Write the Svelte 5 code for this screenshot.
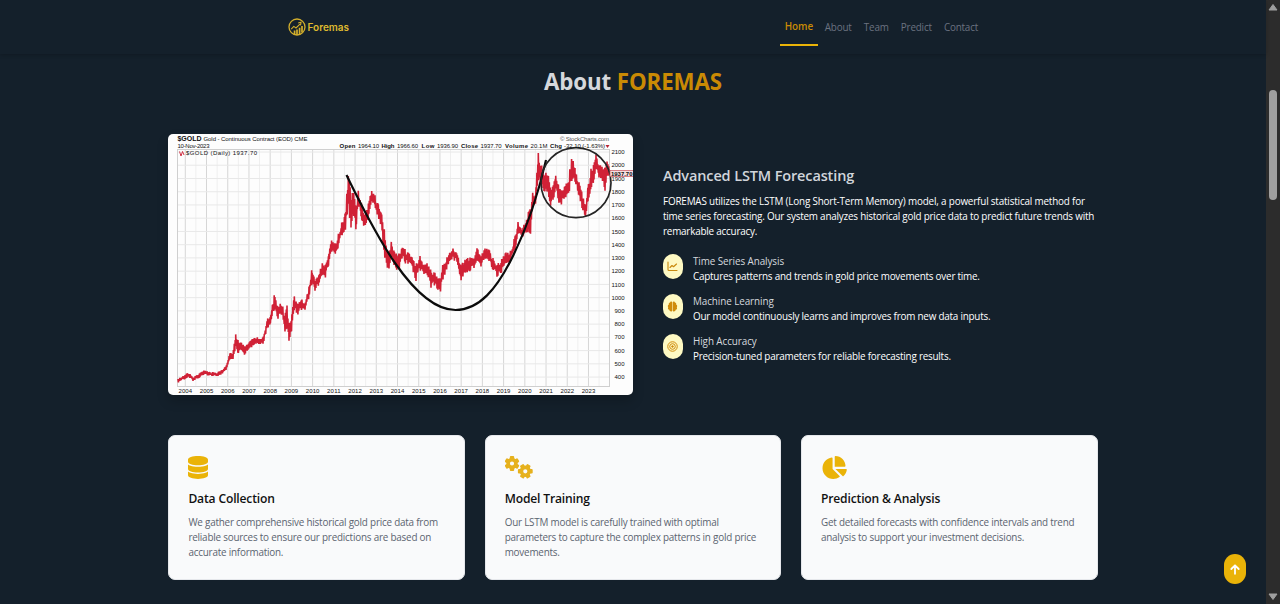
<script>
  const links = ['Home', 'About', 'Team', 'Predict', 'Contact'];
  const features = [
    { icon: 'line', title: 'Time Series Analysis', text: 'Captures patterns and trends in gold price movements over time.' },
    { icon: 'brain', title: 'Machine Learning', text: 'Our model continuously learns and improves from new data inputs.' },
    { icon: 'target', title: 'High Accuracy', text: 'Precision-tuned parameters for reliable forecasting results.' }
  ];
  const cards = [
    { icon: 'db', title: 'Data Collection', lines: ['We gather comprehensive historical gold price data from', 'reliable sources to ensure our predictions are based on', 'accurate information.'] },
    { icon: 'cogs', title: 'Model Training', lines: ['Our LSTM model is carefully trained with optimal', 'parameters to capture the complex patterns in gold price', 'movements.'] },
    { icon: 'pie', title: 'Prediction & Analysis', lines: ['Get detailed forecasts with confidence intervals and trend', 'analysis to support your investment decisions.'] }
  ];

  // Price band: x, high, low
  const band = [
    [178, 379, 383], [183, 376, 380], [187, 373, 378], [190, 374, 378], [193, 377, 381], [199, 374, 378], [205, 369, 374], [208, 372, 376],
    [218, 372, 376], [222, 370, 374], [226, 366, 370], [230, 353, 359], [233, 353, 359], [235.7, 334, 348], [238, 340, 355], [241, 341, 350],
    [244.5, 346, 355], [248, 343, 350], [252, 339, 347], [256, 336, 344], [260, 339, 346], [263, 337, 344], [267.7, 318, 328], [270, 317, 326],
    [272, 307, 316], [274.5, 293, 310], [278, 306, 319], [281.5, 299, 315], [285, 315, 332], [287, 305, 326], [289, 325, 341], [291.5, 312, 332],
    [294.3, 296, 310], [297.5, 304, 316], [301.5, 299, 310], [305, 301, 310], [309, 286, 299], [311.7, 267, 286], [315, 279, 291], [318.3, 275, 286],
    [322.3, 263, 276], [325.7, 264, 278], [328.5, 251, 266], [331.7, 240, 252], [335.7, 243, 256], [341.7, 222, 236], [345, 213, 234], [348.3, 175, 210],
    [351, 190, 228], [353.7, 192, 218], [356, 205, 230], [358.3, 190, 206], [361, 199, 217], [364, 214, 229], [368, 203, 219], [371.7, 191, 201],
    [375, 195, 208], [378.3, 204, 220], [381.7, 214, 228], [384.3, 229, 256], [387.7, 252, 275], [391.7, 240, 258], [394, 250, 265], [398, 255, 275],
    [402, 244, 259], [405, 249, 264], [408, 251, 264], [412, 257, 269], [416, 264, 281], [420, 256, 271], [424, 264, 274], [427, 263, 274],
    [431, 270, 288], [434, 272, 285], [437, 274, 289], [440.5, 280, 292], [443, 258, 280], [447, 257, 269], [451.7, 247, 260], [457, 249, 262],
    [460.7, 264, 283], [465, 259, 276], [470, 257, 272], [474, 255, 268], [477, 248, 262], [481, 255, 267], [485, 248, 259], [489, 249, 261],
    [493, 258, 270], [497, 264, 277], [501.7, 259, 273], [506, 252, 267], [510, 251, 263], [515, 236, 250], [518, 222, 234], [523, 227, 241],
    [527, 214, 232], [530, 208, 240], [532.7, 192, 208], [535.5, 190, 204], [538.3, 153, 180], [541.7, 165, 186], [545, 175, 196], [547, 168, 192],
    [550.7, 189, 209], [555.7, 175, 193], [560, 188, 208], [564, 184, 199], [568, 182, 198], [571.8, 153, 182], [575, 168, 182], [579, 182, 198],
    [582, 192, 208], [585.5, 205, 217], [588, 184, 202], [591, 168, 191], [593.5, 165, 184], [596, 154, 168], [599, 164, 178], [602, 166, 180],
    [605, 168, 191], [607, 161, 176], [609, 165, 181]
  ];
  let seed = 17;
  const rand = () => (seed = (seed * 16807) % 2147483647) / 2147483647;
  let pts = [];
  for (let i = 0; i < band.length - 1; i++) {
    const [x0, h0, l0] = band[i];
    const [x1, h1, l1] = band[i + 1];
    for (let x = x0; x < x1; x += 0.45) {
      const t = (x - x0) / (x1 - x0);
      const h = h0 + (h1 - h0) * t;
      const l = l0 + (l1 - l0) * t;
      const m = (h + l) / 2;
      const up = pts.length % 2 === 0;
      const k = x === x0 ? 0.1 : 0.8;
      const y = up ? h + (m - h) * rand() * k : l + (m - l) * rand() * k;
      pts.push(`${x.toFixed(1)},${y.toFixed(1)}`);
    }
  }
  const series = pts.join(' ');
  const years = Array.from({ length: 20 }, (_, i) => 2004 + i);
  const prices = Array.from({ length: 18 }, (_, i) => 2100 - i * 100);
  const yx = (i) => 185.3 + i * 21.22;
  const py = (i) => 152 + i * 13.24;
  const gear = (cx, cy, rot) =>
    Array.from({ length: 6 }, (_, i) => ({ t: `translate(${cx} ${cy}) rotate(${rot + i * 60})` }));
</script>

<div class="window">
  <div class="page">
    <header>
      <div class="brand">
        <svg width="18" height="18" viewBox="0 0 18 18" fill="none" stroke="#d3af2c">
          <circle cx="9" cy="9" r="8" stroke-width="1.3" />
          <path d="M3.2 11.2 5.8 8.4 8 10 12 6.2" stroke-width="1.1" />
          <path d="M10.2 5 13 4.3 12.5 7.3" stroke-width="1.1" />
          <path d="M6.6 16.5V12.5M9 17V11.5M11.6 16.5V9.8M14 14.5V8" stroke-width="1.7" />
        </svg>
        <span>Foremas</span>
      </div>
      <nav>
        {#each links as link, i}<a class:active={i === 0} href="#{link}">{link}</a>{/each}
      </nav>
    </header>

    <h1><span>About</span> <em>FOREMAS</em></h1>

    <section class="intro">
      <svg class="chart" viewBox="168 134 465 261" width="465" height="261">
        <rect x="168" y="134" width="466" height="261" fill="#fdfdfd" />
        <g stroke="#efefef" stroke-width="1">
          {#each years as _, i}<path d="M{yx(i) + 10.6} 149.5V386.5" />{/each}
        </g>
        <g stroke="#d6d6d6" stroke-width="1">
          {#each years as _, i}<path d="M{yx(i)} 149.5V386.5" />{/each}
        </g>
        <g stroke="#e8e8e8" stroke-width="1">
          {#each prices as _, i}<path d="M177.5 {py(i)}H609.5" />{/each}
        </g>
        <rect x="177.5" y="149.5" width="432" height="237" fill="none" stroke="#cfcfcf" />
        <polyline points={series} fill="none" stroke="#d02136" stroke-width="1.6" stroke-linejoin="bevel" />
        <path d="M346.5 175C355 193 362 206 368.3 218C378 236 386 250 395 263C413 289 434 310 455.5 310C480 310 497 287 510 262C528 227 538 195 546 160" fill="none" stroke="#0c0c0c" stroke-width="2.2" />
        <circle cx="576" cy="182.7" r="35" fill="none" stroke="#252525" stroke-width="1.7" />
        <g class="ct">
          <text x="177.5" y="141" font-weight="700" font-size="7" textLength="24">$GOLD</text>
          <text x="203.5" y="141" textLength="104">Gold - Continuous Contract (EOD) CME</text>
          <text x="177.5" y="148.3" textLength="32">10-Nov-2023</text>
          <text x="560" y="141" textLength="49" class="soft">© StockCharts.com</text>
          <text x="339.5" y="148.3" textLength="16" font-weight="700">Open</text>
          <text x="358" y="148.3" textLength="21">1964.10</text>
          <text x="381.5" y="148.3" textLength="13" font-weight="700">High</text>
          <text x="397" y="148.3" textLength="21">1966.60</text>
          <text x="421.5" y="148.3" textLength="13" font-weight="700">Low</text>
          <text x="437" y="148.3" textLength="21">1936.90</text>
          <text x="461" y="148.3" textLength="17" font-weight="700">Close</text>
          <text x="480.5" y="148.3" textLength="21">1937.70</text>
          <text x="505" y="148.3" textLength="23" font-weight="700">Volume</text>
          <text x="530.5" y="148.3" textLength="17">20.1M</text>
          <text x="550" y="148.3" textLength="12" font-weight="700">Chg</text>
          <text x="564" y="148.3" textLength="41">-32.10 (-1.63%)</text>
          <path d="M605.5 145h4l-2 3z" fill="#b52333" />
          <path d="M179.5 151.5 181 156 182.5 151.5 184 155" fill="none" stroke="#cd2035" stroke-width=".9" />
          <text x="186" y="155.4" textLength="71">$GOLD (Daily) 1937.70</text>
          {#each years as y, i}<text x={yx(i) - 6.8} y="392.6" textLength="13.6">{y}</text>{/each}
          {#each prices as p, i}<text x={p > 999 ? 611.5 : 614.5} y={py(i) + 2.1} textLength={p > 999 ? 13 : 10}>{p}</text>{/each}
        </g>
        <rect x="610" y="170.5" width="23.5" height="6" fill="#f7dfe0" stroke="#c9515b" stroke-width=".7" />
        <text class="now" x="611" y="175.8" textLength="21.5">1937.70</text>
      </svg>

      <div class="copy">
        <h2>Advanced LSTM Forecasting</h2>
        <p class="lead">
          <span>FOREMAS utilizes the LSTM (Long Short-Term Memory) model, a powerful statistical method for</span>
          <span>time series forecasting. Our system analyzes historical gold price data to predict future trends with</span>
          <span>remarkable accuracy.</span>
        </p>
        {#each features as f, i}
          <div class="feature f{i}">
            <div class="pill">
              {#if f.icon === 'line'}
                <svg width="11" height="11" viewBox="0 0 22 22" fill="none" stroke="#c98a10" stroke-width="2.3" stroke-linecap="round" stroke-linejoin="round"><path d="M2 2V17Q2 19 4 19H20" /><path d="M6 13 10 9 13 11.5 19 6" /></svg>
              {:else if f.icon === 'brain'}
                <svg width="11" height="11" viewBox="0 0 22 22" fill="#cf8b0b"><path d="M10.4 2.5C10.4.2 6.5.2 6.2 3 3.8 3 3 5.2 3.8 7 1.4 8 1 11 2.4 12.5 1 15 2.4 17.4 4.6 17.7 4.9 21.5 10.4 22 10.4 19ZM11.6 2.5C11.6.2 15.5.2 15.8 3 18.2 3 19 5.2 18.2 7 20.6 8 21 11 19.6 12.5 21 15 19.6 17.4 17.4 17.7 17.1 21.5 11.6 22 11.6 19Z" /></svg>
              {:else}
                <svg width="11" height="11" viewBox="0 0 22 22" fill="none" stroke="#cf8b0b" stroke-width="2"><circle cx="11" cy="11" r="9.5" /><circle cx="11" cy="11" r="5.6" /><circle cx="11" cy="11" r="1.6" fill="#cf8b0b" /></svg>
              {/if}
            </div>
            <div><h3>{f.title}</h3><p>{f.text}</p></div>
          </div>
        {/each}
      </div>
    </section>

    <section class="cards">
      {#each cards as c}
        <article>
          {#if c.icon === 'db'}
            <svg width="20" height="23" viewBox="0 0 448 512" fill="#eab308"><path d="M448 80v48c0 44.200-100.300 80-224 80S0 172.200 0 128V80C0 35.800 100.300 0 224 0S448 35.800 448 80zM393.200 214.700c20.800-7.400 39.900-16.900 54.800-28.600V288c0 44.200-100.300 80-224 80S0 332.200 0 288V186.100c14.900 11.800 34 21.200 54.800 28.600C99.700 230.700 159.500 240 224 240s124.300-9.300 169.200-25.300zM0 346.100c14.900 11.800 34 21.200 54.800 28.600C99.700 390.700 159.500 400 224 400s124.300-9.300 169.200-25.300c20.800-7.400 39.900-16.900 54.800-28.600V432c0 44.200-100.300 80-224 80S0 476.200 0 432V346.100z" /></svg>
          {:else if c.icon === 'cogs'}
            <svg width="28" height="23" viewBox="0 0 28 23" fill="#e6b11d">
              {#each gear(7, 7.5, 0) as g}<rect x="-2.2" y="-7.4" width="4.4" height="4.5" rx="1" transform={g.t} />{/each}
              {#each gear(20.3, 15.3, 30) as g}<rect x="-2.2" y="-7.4" width="4.4" height="4.5" rx="1" transform={g.t} />{/each}
              <g fill="none" stroke="#e6b11d" stroke-width="3.6"><circle cx="7" cy="7.5" r="3.9" /><circle cx="20.3" cy="15.3" r="3.9" /></g>
            </svg>
          {:else}
            <svg width="26" height="23" viewBox="0 0 576 512" fill="#eab308"><path d="M304 240V16.600c0-9 7-16.600 16-16.600C443.700 0 544 100.300 544 224c0 9-7.600 16-16.600 16H304zM32 272C32 150.700 122.100 50.300 239 34.300c9.200-1.300 17 6.100 17 15.400V288L412.500 444.500c6.700 6.700 6.200 17.700-1.500 23.100C371.800 495.600 323.800 512 272 512C139.500 512 32 404.600 32 272zm526.400 16c9.300 0 16.600 7.800 15.400 17c-7.700 55.900-34.600 105.600-73.900 142.300c-6 5.600-15.400 5.200-21.200-.7L320 288H558.400z" /></svg>
          {/if}
          <h3>{c.title}</h3>
          <p>{#each c.lines as line}<span>{line}</span>{/each}</p>
        </article>
      {/each}
    </section>

    <button aria-label="Back to top">
      <svg width="10" height="11" viewBox="0 0 10 11" fill="none" stroke="#fff" stroke-width="1.8" stroke-linecap="round" stroke-linejoin="round"><path d="M5 9.8V1.5M1.3 5 5 1.3 8.7 5" /></svg>
    </button>
  </div>
  <div class="scroll">
    <svg width="10" height="7" viewBox="0 0 10 7"><path d="M5 .5 9 6H1z" fill="#9f9f9f" stroke="#9f9f9f" stroke-linejoin="round" /></svg>
    <div class="thumb"></div>
    <svg class="down" width="10" height="7" viewBox="0 0 10 7"><path d="M5 6.5 9 1H1z" fill="#9f9f9f" stroke="#9f9f9f" stroke-linejoin="round" /></svg>
  </div>
</div>

<style>
  :global(body) { margin: 0; background: #14202b; }
  .window { display: flex; width: 1280px; height: 604px; overflow: hidden; font-family: 'Open Sans', 'Noto Sans', sans-serif; font-size: 9.9px; line-height: 15px; letter-spacing: -.21px; }
  .page { position: relative; width: 1266px; background: #14202b; }
  h1, h2, h3, p { margin: 0; }
  header { box-sizing: border-box; height: 54px; display: flex; justify-content: space-between; padding: 0 288px 0 287.5px; box-shadow: 0 1px 4px rgba(0, 0, 0, .22); }
  .brand { display: flex; height: 54px; align-items: center; gap: 2px; color: #dfb930; font: 600 10px/16px Inter, sans-serif; letter-spacing: 0; }
  nav { display: flex; gap: 12.2px; letter-spacing: -.2px; }
  nav a { color: #6b7280; text-decoration: none; line-height: 15px; padding-top: 20px; white-space: nowrap; }
  nav a.active { box-sizing: border-box; height: 46px; padding: 19px 4.5px 0; margin: 0 -5px 0 0; color: #ca8a04; font-weight: 600; letter-spacing: -.05px; border-bottom: 2px solid #eab308; }
  h1 { margin-top: 13px; height: 30px; text-align: center; font-size: 22.3px; line-height: 30px; font-weight: 700; letter-spacing: -.1px; color: #d6d8dc; white-space: nowrap; }
  h1 em { font-style: normal; color: #ca8a04; }
  .intro { display: flex; gap: 29.6px; margin: 37px 0 0 168.4px; height: 261px; }
  .chart { flex: none; border-radius: 5px; box-shadow: 0 6px 12px rgba(0, 0, 0, .2); letter-spacing: 0; }
  .ct, .now { font-family: 'Liberation Sans', Arial, sans-serif; font-size: 6px; fill: #111; }
  .soft { fill: #555; }
  .now { font-weight: 700; }
  .copy { padding-top: 31px; white-space: nowrap; color: #fff; }
  h2 { font-size: 14.5px; line-height: 22px; font-weight: 600; letter-spacing: -.13px; color: #d1d5db; }
  .lead { margin-top: 7px; }
  .lead span, article p span { display: block; width: max-content; }
  .lead span:first-child { letter-spacing: -.175px; }
  .feature { display: flex; gap: 10px; height: 40.4px; }
  .f0 { margin-top: 14.6px; }
  .pill { display: flex; align-items: center; justify-content: center; width: 20px; height: 25px; border-radius: 10px; background: #fef9c3; }
  .feature h3 { font-size: 9.9px; line-height: 15px; font-weight: 500; letter-spacing: -.08px; color: #d6d9de; }
  .feature p { letter-spacing: -.22px; }
  .cards { display: grid; grid-template-columns: repeat(3, 296.7px); gap: 19.6px; margin: 39.5px 0 0 168.4px; }
  article { box-sizing: border-box; height: 145px; padding: 20.5px 19px 0; border-radius: 7px; background: #f9fafb; border: .5px solid #e5e7eb; white-space: nowrap; color: #5b6470; }
  article svg { display: block; }
  article h3 { margin-top: 10.5px; font-size: 12.1px; line-height: 18px; font-weight: 600; letter-spacing: -.16px; color: #111; }
  article p { margin-top: 7.5px; }
  button { position: absolute; left: 1224px; top: 554px; width: 22px; height: 30px; padding: 0; border: 0; border-radius: 11px; background: #eab308; display: flex; align-items: center; justify-content: center; }
  .scroll { box-sizing: border-box; width: 14px; background: #2c2c2c; display: flex; flex-direction: column; align-items: center; padding: 4px 0; }
  .thumb { width: 8px; height: 110px; margin-top: 79px; border-radius: 4px; background: #9f9f9f; }
  .down { margin-top: auto; }
</style>
